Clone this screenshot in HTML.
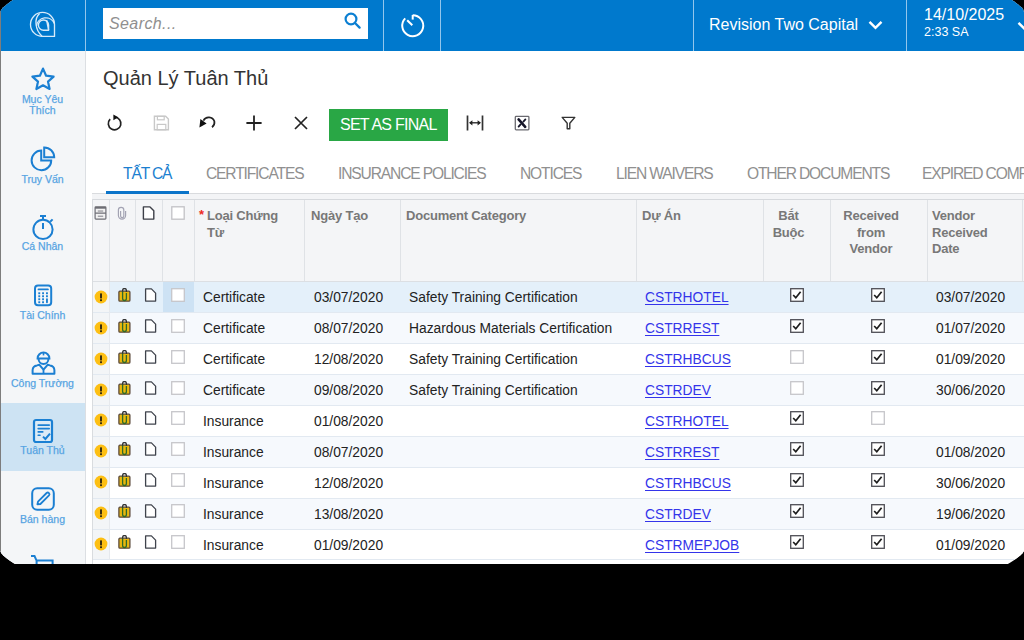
<!DOCTYPE html>
<html><head><meta charset="utf-8">
<style>
*{box-sizing:border-box;margin:0;padding:0}
html,body{width:1024px;height:640px;background:#000;overflow:hidden;font-family:"Liberation Sans",sans-serif}
#frame{position:absolute;left:0;top:0;width:1024px;height:564px;background:#fff;overflow:hidden;clip-path:polygon(0px 12px,1.5px 9.4px,3px 7.6px,5px 5.9px,7px 4.3px,9px 2.8px,11px 1.3px,13px 0px,1011.8px 0px,1013.8px 1.3px,1015.8px 2.8px,1017.8px 4.3px,1019.8px 5.9px,1021.8px 7.6px,1023px 9.3px,1024px 11.9px,1024px 550.9px,1022.5px 553.3px,1020.5px 555.2px,1018.3px 557px,1016px 558.8px,1013.5px 560.5px,1010.8px 562.3px,1007.9px 564px,15px 564px,12.2px 562.3px,9.6px 560.5px,7.2px 558.8px,5px 557px,3px 555.2px,1.4px 553.2px,0px 550.6px)}
.abs{position:absolute}
#hdr{position:absolute;left:0;top:0;width:1024px;height:51px;background:#0079cd}
.vdiv{position:absolute;top:0;width:1px;height:51px;background:#93c6ec}
#search{position:absolute;left:103px;top:8px;width:265px;height:31px;background:#fff}
#search span{position:absolute;left:6px;top:7px;font-size:16px;font-style:italic;color:#8f8f8f;line-height:18px;letter-spacing:0.4px}
.wt{position:absolute;color:#fff;white-space:nowrap}
#side{position:absolute;left:0;top:51px;width:85px;height:513px;background:#f4f6f8}
#sdiv{position:absolute;left:85px;top:51px;width:1px;height:513px;background:#dcdfe3}
.sl{position:absolute;left:0;width:85px;text-align:center;font-size:10.5px;line-height:11.3px;color:#4b9de0;-webkit-text-stroke:0.25px #6aaee6;white-space:nowrap}
#leftedge{position:absolute;left:0;top:0;width:1px;height:564px;background:#7d7d7d}
#title{position:absolute;left:103px;top:67px;font-size:20px;line-height:23px;color:#333;white-space:nowrap}
#btn{position:absolute;left:329px;top:109px;width:119px;height:32px;background:#29a745;color:#fff;font-size:16px;letter-spacing:-0.75px;line-height:32px;padding-left:11px;white-space:nowrap}
.tab{position:absolute;top:165px;font-size:15.6px;line-height:17px;letter-spacing:-1.15px;color:#909090;white-space:nowrap}
#tabline{position:absolute;left:92px;top:193px;width:932px;height:1px;background:#d9dbde}
#tabul{position:absolute;left:106px;top:191px;width:83px;height:3px;background:#0b74c9}
.ht{position:absolute;font-size:13px;font-weight:bold;color:#787878;line-height:16.5px;white-space:nowrap;letter-spacing:-0.2px}
.cell{position:absolute;font-size:13.8px;line-height:16px;color:#222;white-space:nowrap}
a.lnk{color:#3434ea;text-decoration:underline;text-underline-offset:1.5px}

</style></head><body>
<div id="frame">
  <div id="hdr">
    <svg class="abs" style="left:27px;top:9px" width="32" height="32" viewBox="0 0 32 32">
      <g fill="none" stroke="#d8ebfa" stroke-width="1.35" stroke-linejoin="round">
        <path d="M27.5 15.4 L27.5 27.4 L15.5 27.4 A12 12 0 1 1 27.5 15.4 Z"/>
        <path d="M21.6 16 L21.6 21.2 L16.6 21.2 A5.1 5.1 0 1 1 21.6 16 Z"/><path d="M19.6 11 L21.6 21.2"/>
        <path d="M9.4 17.2 A9.4 9.4 0 0 1 27.4 14.6"/>
        <path d="M12.6 4.4 C7.2 9 7.6 20.5 15.2 27.4"/>
      </g>
    </svg>
    <div class="vdiv" style="left:85px"></div>
    <div id="search"><span>Search...</span>
      <svg class="abs" style="left:240px;top:3px" width="20" height="22" viewBox="0 0 20 22"><circle cx="8" cy="8" r="5.4" fill="none" stroke="#0b7fd2" stroke-width="2.2"/><path d="M12 12 L16.6 16.6" stroke="#0b7fd2" stroke-width="2.3" stroke-linecap="round"/></svg>
    </div>
    <div class="vdiv" style="left:383px"></div>
    <svg class="abs" style="left:399px;top:12px" width="28" height="28" viewBox="0 0 28 28">
      <path d="M13.7 3.2 A10.5 10.5 0 1 1 6.2 6.4" fill="none" stroke="#fff" stroke-width="2"/>
      <path d="M13.7 3 L13.7 7.6" stroke="#fff" stroke-width="2"/>
      <path d="M8.2 8.2 L13.3 13.3" stroke="#fff" stroke-width="2"/>
    </svg>
    <div class="vdiv" style="left:440px"></div>
    <div class="vdiv" style="left:693px"></div>
    <div class="wt" style="left:709px;top:16px;font-size:16px;line-height:18px">Revision Two Capital</div>
    <svg class="abs" style="left:868px;top:20px" width="15" height="10" viewBox="0 0 15 10"><path d="M1.5 1.8 L7.5 7.8 L13.5 1.8" fill="none" stroke="#fff" stroke-width="2.4"/></svg>
    <div class="vdiv" style="left:906px"></div>
    <div class="wt" style="left:924px;top:5.5px;font-size:16px;line-height:18px">14/10/2025</div>
    <div class="wt" style="left:924px;top:25px;font-size:12.5px;line-height:14px">2:33 SA</div>
    <svg class="abs" style="left:1017px;top:20.5px" width="15" height="10" viewBox="0 0 15 10"><path d="M1.5 1.8 L7.5 7.8 L13.5 1.8" fill="none" stroke="#fff" stroke-width="2.4"/></svg>
  </div>
  <div id="side"></div>
  <div class="abs" style="left:1px;top:403px;width:84px;height:68px;background:#cde3f3"></div>
  <div id="sdiv"></div>
  <!-- star -->
  <svg class="abs" style="left:30px;top:66px" width="26" height="25" viewBox="0 0 26 25">
    <path d="M13 2.6 L16.1 9.7 L23.6 10.6 L18 15.6 L19.6 23 L13 19.3 L6.4 23 L8 15.6 L2.4 10.6 L9.9 9.7 Z" fill="none" stroke="#1b80d3" stroke-width="2.2" stroke-linejoin="round"/>
  </svg>
  <div class="sl" style="top:94px">Mục Yêu<br>Thích</div>
  <!-- pie -->
  <svg class="abs" style="left:29px;top:146px" width="28" height="28" viewBox="0 0 28 28">
    <path d="M12.2 4.6 A9.8 9.8 0 1 0 22.2 14.4 L12.2 14.4 Z" fill="none" stroke="#1b7fd2" stroke-width="2" stroke-linejoin="miter"/>
    <path d="M15.2 1.4 A9.9 9.9 0 0 1 25.2 11.2 L15.2 11.2 Z" fill="none" stroke="#1b7fd2" stroke-width="2" stroke-linejoin="miter"/>
  </svg>
  <div class="sl" style="top:174px">Truy Vấn</div>
  <!-- stopwatch -->
  <svg class="abs" style="left:30px;top:213px" width="26" height="28" viewBox="0 0 26 28">
    <circle cx="13" cy="16.4" r="9.6" fill="none" stroke="#1b7fd2" stroke-width="2"/>
    <path d="M10 3 L16 3 M13 3 L13 6.6" stroke="#1b7fd2" stroke-width="2"/>
    <path d="M13 10 L13 16" stroke="#1b7fd2" stroke-width="2"/>
    <path d="M20.2 8.8 L22.6 6.4" stroke="#1b7fd2" stroke-width="2"/>
  </svg>
  <div class="sl" style="top:241px">Cá Nhân</div>
  <!-- calculator -->
  <svg class="abs" style="left:33px;top:283px" width="21" height="24" viewBox="0 0 21 24">
    <rect x="2" y="2.5" width="16.2" height="19.8" rx="3" fill="none" stroke="#1b80d3" stroke-width="2"/>
    <rect x="4.6" y="5.4" width="11.2" height="1.9" rx="0.9" fill="#1b80d3"/>
    <g fill="#1b80d3">
      <rect x="5.3" y="9.3" width="1.9" height="1.9"/><rect x="9.1" y="9.3" width="1.9" height="1.9"/><rect x="13" y="9.3" width="1.9" height="1.9"/>
      <rect x="5.3" y="12.3" width="1.9" height="1.9"/><rect x="9.1" y="12.3" width="1.9" height="1.9"/><rect x="13" y="12.3" width="1.9" height="1.9"/>
      <rect x="5.3" y="15.3" width="1.9" height="1.9"/><rect x="9.1" y="15.3" width="1.9" height="1.9"/>
      <rect x="5.3" y="18.3" width="1.9" height="1.9"/><rect x="9.1" y="18.3" width="1.9" height="1.9"/><rect x="13" y="15.3" width="1.9" height="4.9" rx="0.9"/>
    </g>
  </svg>
  <div class="sl" style="top:310px">Tài Chính</div>
  <!-- worker -->
  <svg class="abs" style="left:31px;top:349px" width="25" height="27" viewBox="0 0 25 27">
    <path d="M6.6 9.4 A5.9 5.9 0 0 1 18.4 9.4 Z" fill="none" stroke="#1b7fd2" stroke-width="2"/>
    <path d="M12.5 3.4 L12.5 6.4" stroke="#1b7fd2" stroke-width="1.6"/>
    <path d="M7.6 10 A4.9 5 0 0 0 17.4 10" fill="none" stroke="#1b7fd2" stroke-width="2"/>
    <path d="M1.6 24.8 L1.6 21 A5 5 0 0 1 6 16.4 L8.4 15.8 L12.5 20.6 L16.6 15.8 L19 16.4 A5 5 0 0 1 23.4 21 L23.4 24.8 Z" fill="none" stroke="#1b7fd2" stroke-width="2" stroke-linejoin="round"/>
    <path d="M12.5 20.6 L12.5 24.5" stroke="#1b7fd2" stroke-width="1.8"/>
  </svg>
  <div class="sl" style="top:378px">Công Trường</div>
  <!-- compliance doc -->
  <svg class="abs" style="left:32px;top:418px" width="23" height="26" viewBox="0 0 23 26">
    <rect x="2" y="2" width="18" height="22" rx="2" fill="rgba(255,255,255,0.3)" stroke="#1b80d3" stroke-width="2.2"/>
    <g fill="#1b80d3"><rect x="5.4" y="6.3" width="12.6" height="1.7" rx="0.8"/><rect x="5.4" y="9.8" width="12.6" height="1.7" rx="0.8"/><rect x="5.4" y="13.1" width="6.2" height="1.6" rx="0.8"/><rect x="5.4" y="16.5" width="3.4" height="1.5" rx="0.7"/></g>
    <path d="M11 18.6 L13.4 21 L18 15.6" fill="none" stroke="#1b80d3" stroke-width="2"/>
  </svg>
  <div class="sl" style="top:445px">Tuân Thủ</div>
  <!-- pencil -->
  <svg class="abs" style="left:30px;top:486px" width="26" height="26" viewBox="0 0 26 26">
    <rect x="2.2" y="2.2" width="21.6" height="21.6" rx="5" fill="none" stroke="#1b7fd2" stroke-width="2"/>
    <path d="M7.4 18.4 L8 15.6 L16.6 7 A1.7 1.7 0 0 1 19 9.4 L10.4 18 Z" fill="none" stroke="#1b7fd2" stroke-width="1.8" stroke-linejoin="round"/>
  </svg>
  <div class="sl" style="top:514px">Bán hàng</div>
  <!-- cart -->
  <svg class="abs" style="left:29px;top:553px" width="26" height="16" viewBox="0 0 26 16">
    <path d="M2 3 L5.5 3 L7.6 7.6 L7.6 16 M7.6 7.6 L23.6 7.6 L23.6 16" fill="none" stroke="#1b7fd2" stroke-width="2"/>
  </svg>
  <div id="title">Quản Lý Tuân Thủ</div>
  <!-- toolbar -->
  <svg class="abs" style="left:106px;top:114px" width="18" height="18" viewBox="0 0 18 18">
    <path d="M8.6 3.2 A6.3 6.3 0 1 1 4.15 5.05" fill="none" stroke="#222" stroke-width="1.7"/>
    <path d="M7.4 0.4 L12.2 3.2 L7.4 6.2 Z" fill="#111"/>
  </svg>
  <svg class="abs" style="left:153px;top:115px" width="17" height="16" viewBox="0 0 17 16">
    <path d="M1.4 1.2 L12.6 1.2 L15.4 4 L15.4 14.8 L1.4 14.8 Z" fill="none" stroke="#c8c8c8" stroke-width="1.4"/>
    <rect x="4.4" y="1.4" width="6.8" height="3.4" fill="none" stroke="#c8c8c8" stroke-width="1.2"/>
    <rect x="4.2" y="9.4" width="8.6" height="5.4" fill="none" stroke="#c8c8c8" stroke-width="1.2"/>
  </svg>
  <svg class="abs" style="left:198px;top:115px" width="20" height="14" viewBox="0 0 20 14">
    <path d="M5.4 5.6 A6 6 0 0 1 16.4 6.4 A6 6 0 0 1 14 12.2" fill="none" stroke="#222" stroke-width="1.7"/>
    <path d="M1.4 12.6 L2.4 4 L8.6 8.6 Z" fill="#111"/>
  </svg>
  <svg class="abs" style="left:246px;top:115px" width="16" height="16" viewBox="0 0 16 16">
    <path d="M8 0.4 L8 15.6 M0.4 8 L15.6 8" stroke="#222" stroke-width="1.8"/>
  </svg>
  <svg class="abs" style="left:294px;top:116px" width="14" height="14" viewBox="0 0 14 14">
    <path d="M1 1 L13 13 M13 1 L1 13" stroke="#222" stroke-width="1.7"/>
  </svg>
  <div id="btn">SET AS FINAL</div>
  <svg class="abs" style="left:466px;top:115px" width="18" height="16" viewBox="0 0 18 16">
    <path d="M1.5 0.5 L1.5 15.5 M16.5 0.5 L16.5 15.5" stroke="#333" stroke-width="1.7"/>
    <path d="M4 7.8 L14 7.8" stroke="#222" stroke-width="1.3"/>
    <path d="M3 7.8 L6.4 5.2 L6.4 10.4 Z M15 7.8 L11.6 5.2 L11.6 10.4 Z" fill="#222"/>
  </svg>
  <svg class="abs" style="left:514px;top:115px" width="16" height="16" viewBox="0 0 16 16">
    <rect x="1.3" y="1.4" width="13.6" height="13.4" rx="0.8" fill="#fff" stroke="#6a6a70" stroke-width="1.3"/>
    <path d="M4.6 4.4 L11.2 11.8" stroke="#141428" stroke-width="2.6" stroke-linecap="round"/>
    <path d="M11.4 4.4 L9.4 6.6 M6.6 9.4 L4.6 11.6" stroke="#141428" stroke-width="1.8" stroke-linecap="round"/>
  </svg>
  <svg class="abs" style="left:560px;top:116px" width="17" height="14" viewBox="0 0 17 14">
    <path d="M2.2 1.4 L14.8 1.4 L9.8 7.2 L9.8 12.8 L7.2 12.8 L7.2 7.2 Z" fill="none" stroke="#333" stroke-width="1.4" stroke-linejoin="round"/>
  </svg>

  <div class="tab" style="left:123px;color:#1b7fd0">TẤT CẢ</div>
  <div class="tab" style="left:206px">CERTIFICATES</div>
  <div class="tab" style="left:338px">INSURANCE POLICIES</div>
  <div class="tab" style="left:520px">NOTICES</div>
  <div class="tab" style="left:616px">LIEN WAIVERS</div>
  <div class="tab" style="left:747px">OTHER DOCUMENTS</div>
  <div class="tab" style="left:922px">EXPIRED COMPLIANCE</div>
  <div id="tabline"></div>
  <div id="tabul"></div>
<div class="abs" style="left:92px;top:194px;width:932px;height:5px;background:#f3f4f6"></div>
<div class="abs" style="left:92px;top:199px;width:932px;height:1px;background:#d6d9dd"></div>
<div class="abs" style="left:92px;top:200px;width:932px;height:81px;background:#f4f5f7"></div>
<div class="abs" style="left:92px;top:281px;width:932px;height:1px;background:#dcdfe3"></div>
<div class="abs" style="left:109px;top:200px;width:1px;height:81px;background:#dfe2e6"></div>
<div class="abs" style="left:135px;top:200px;width:1px;height:81px;background:#dfe2e6"></div>
<div class="abs" style="left:162px;top:200px;width:1px;height:81px;background:#dfe2e6"></div>
<div class="abs" style="left:194px;top:200px;width:1px;height:81px;background:#dfe2e6"></div>
<div class="abs" style="left:304px;top:200px;width:1px;height:81px;background:#dfe2e6"></div>
<div class="abs" style="left:400px;top:200px;width:1px;height:81px;background:#dfe2e6"></div>
<div class="abs" style="left:636px;top:200px;width:1px;height:81px;background:#dfe2e6"></div>
<div class="abs" style="left:763px;top:200px;width:1px;height:81px;background:#dfe2e6"></div>
<div class="abs" style="left:830px;top:200px;width:1px;height:81px;background:#dfe2e6"></div>
<div class="abs" style="left:927px;top:200px;width:1px;height:81px;background:#dfe2e6"></div>
<div class="abs" style="left:1022px;top:200px;width:1px;height:81px;background:#dfe2e6"></div>
<div class="abs" style="left:109px;top:282px;width:915px;height:30px;background:#e4f0fa"></div>
<div class="abs" style="left:92px;top:282px;width:17px;height:30px;background:#f3f5f7"></div>
<div class="abs" style="left:163px;top:282px;width:31px;height:30px;background:#cde2f4"></div>
<svg class="abs" style="left:94px;top:290px" width="14" height="14" viewBox="0 0 14 14"><circle cx="7" cy="7" r="6.4" fill="#fdbf13"/><rect x="6" y="3.4" width="2" height="5" fill="#3a2f10"/><rect x="6" y="9.3" width="2" height="1.8" fill="#3a2f10"/></svg>
<svg class="abs" style="left:118px;top:288px" width="13" height="14" viewBox="0 0 13 14"><rect x="0.9" y="3.2" width="11" height="10" rx="1" fill="#e9b80e" stroke="#5b4a3c" stroke-width="1.3"/><path d="M4.6 3 L4.6 10.6 A1.9 1.9 0 0 0 8.4 10.6 L8.4 5" fill="none" stroke="#2e6a2a" stroke-width="1.3"/><path d="M4.6 3.6 L4.6 2.4 A1.9 1.9 0 0 1 8.4 2.4 L8.4 4" fill="none" stroke="#333" stroke-width="1.3"/></svg>
<svg class="abs" style="left:144px;top:288px" width="13" height="14" viewBox="0 0 13 14"><path d="M1.6 0.9 L7.4 0.9 L11.6 5.1 L11.6 13.1 L1.6 13.1 Z" fill="#fff" stroke="#3f434c" stroke-width="1.3" stroke-linejoin="round"/></svg>
<svg class="abs" style="left:171px;top:288px" width="14" height="14" viewBox="0 0 14 14"><rect x="0.7" y="0.7" width="12.6" height="12.6" fill="#fff" stroke="#c6c6ca" stroke-width="1.3"/></svg>
<div class="cell" style="left:203px;top:290px">Certificate</div>
<div class="cell" style="left:314px;top:290px">03/07/2020</div>
<div class="cell" style="left:409px;top:290px">Safety Training Certification</div>
<div class="cell" style="left:645px;top:290px"><a class="lnk">CSTRHOTEL</a></div>
<svg class="abs" style="left:790px;top:288px" width="14" height="14" viewBox="0 0 14 14"><rect x="0.7" y="0.7" width="12.6" height="12.6" fill="#fff" stroke="#4e4e55" stroke-width="1.3"/><path d="M3.2 7 L5.8 9.8 L10.6 3.8" fill="none" stroke="#1e1e1e" stroke-width="1.7"/></svg>
<svg class="abs" style="left:871px;top:288px" width="14" height="14" viewBox="0 0 14 14"><rect x="0.7" y="0.7" width="12.6" height="12.6" fill="#fff" stroke="#4e4e55" stroke-width="1.3"/><path d="M3.2 7 L5.8 9.8 L10.6 3.8" fill="none" stroke="#1e1e1e" stroke-width="1.7"/></svg>
<div class="cell" style="left:936px;top:290px">03/07/2020</div>
<div class="abs" style="left:109px;top:312px;width:915px;height:31px;background:#f6f9fd"></div>
<div class="abs" style="left:92px;top:312px;width:17px;height:31px;background:#f3f5f7"></div>
<svg class="abs" style="left:94px;top:321px" width="14" height="14" viewBox="0 0 14 14"><circle cx="7" cy="7" r="6.4" fill="#fdbf13"/><rect x="6" y="3.4" width="2" height="5" fill="#3a2f10"/><rect x="6" y="9.3" width="2" height="1.8" fill="#3a2f10"/></svg>
<svg class="abs" style="left:118px;top:319px" width="13" height="14" viewBox="0 0 13 14"><rect x="0.9" y="3.2" width="11" height="10" rx="1" fill="#e9b80e" stroke="#5b4a3c" stroke-width="1.3"/><path d="M4.6 3 L4.6 10.6 A1.9 1.9 0 0 0 8.4 10.6 L8.4 5" fill="none" stroke="#2e6a2a" stroke-width="1.3"/><path d="M4.6 3.6 L4.6 2.4 A1.9 1.9 0 0 1 8.4 2.4 L8.4 4" fill="none" stroke="#333" stroke-width="1.3"/></svg>
<svg class="abs" style="left:144px;top:319px" width="13" height="14" viewBox="0 0 13 14"><path d="M1.6 0.9 L7.4 0.9 L11.6 5.1 L11.6 13.1 L1.6 13.1 Z" fill="#fff" stroke="#3f434c" stroke-width="1.3" stroke-linejoin="round"/></svg>
<svg class="abs" style="left:171px;top:319px" width="14" height="14" viewBox="0 0 14 14"><rect x="0.7" y="0.7" width="12.6" height="12.6" fill="#fff" stroke="#c6c6ca" stroke-width="1.3"/></svg>
<div class="cell" style="left:203px;top:321px">Certificate</div>
<div class="cell" style="left:314px;top:321px">08/07/2020</div>
<div class="cell" style="left:409px;top:321px">Hazardous Materials Certification</div>
<div class="cell" style="left:645px;top:321px"><a class="lnk">CSTRREST</a></div>
<svg class="abs" style="left:790px;top:319px" width="14" height="14" viewBox="0 0 14 14"><rect x="0.7" y="0.7" width="12.6" height="12.6" fill="#fff" stroke="#4e4e55" stroke-width="1.3"/><path d="M3.2 7 L5.8 9.8 L10.6 3.8" fill="none" stroke="#1e1e1e" stroke-width="1.7"/></svg>
<svg class="abs" style="left:871px;top:319px" width="14" height="14" viewBox="0 0 14 14"><rect x="0.7" y="0.7" width="12.6" height="12.6" fill="#fff" stroke="#4e4e55" stroke-width="1.3"/><path d="M3.2 7 L5.8 9.8 L10.6 3.8" fill="none" stroke="#1e1e1e" stroke-width="1.7"/></svg>
<div class="cell" style="left:936px;top:321px">01/07/2020</div>
<div class="abs" style="left:109px;top:343px;width:915px;height:31px;background:#ffffff"></div>
<div class="abs" style="left:92px;top:343px;width:17px;height:31px;background:#f3f5f7"></div>
<svg class="abs" style="left:94px;top:352px" width="14" height="14" viewBox="0 0 14 14"><circle cx="7" cy="7" r="6.4" fill="#fdbf13"/><rect x="6" y="3.4" width="2" height="5" fill="#3a2f10"/><rect x="6" y="9.3" width="2" height="1.8" fill="#3a2f10"/></svg>
<svg class="abs" style="left:118px;top:350px" width="13" height="14" viewBox="0 0 13 14"><rect x="0.9" y="3.2" width="11" height="10" rx="1" fill="#e9b80e" stroke="#5b4a3c" stroke-width="1.3"/><path d="M4.6 3 L4.6 10.6 A1.9 1.9 0 0 0 8.4 10.6 L8.4 5" fill="none" stroke="#2e6a2a" stroke-width="1.3"/><path d="M4.6 3.6 L4.6 2.4 A1.9 1.9 0 0 1 8.4 2.4 L8.4 4" fill="none" stroke="#333" stroke-width="1.3"/></svg>
<svg class="abs" style="left:144px;top:350px" width="13" height="14" viewBox="0 0 13 14"><path d="M1.6 0.9 L7.4 0.9 L11.6 5.1 L11.6 13.1 L1.6 13.1 Z" fill="#fff" stroke="#3f434c" stroke-width="1.3" stroke-linejoin="round"/></svg>
<svg class="abs" style="left:171px;top:350px" width="14" height="14" viewBox="0 0 14 14"><rect x="0.7" y="0.7" width="12.6" height="12.6" fill="#fff" stroke="#c6c6ca" stroke-width="1.3"/></svg>
<div class="cell" style="left:203px;top:352px">Certificate</div>
<div class="cell" style="left:314px;top:352px">12/08/2020</div>
<div class="cell" style="left:409px;top:352px">Safety Training Certification</div>
<div class="cell" style="left:645px;top:352px"><a class="lnk">CSTRHBCUS</a></div>
<svg class="abs" style="left:790px;top:350px" width="14" height="14" viewBox="0 0 14 14"><rect x="0.7" y="0.7" width="12.6" height="12.6" fill="#fff" stroke="#c6c6ca" stroke-width="1.3"/></svg>
<svg class="abs" style="left:871px;top:350px" width="14" height="14" viewBox="0 0 14 14"><rect x="0.7" y="0.7" width="12.6" height="12.6" fill="#fff" stroke="#4e4e55" stroke-width="1.3"/><path d="M3.2 7 L5.8 9.8 L10.6 3.8" fill="none" stroke="#1e1e1e" stroke-width="1.7"/></svg>
<div class="cell" style="left:936px;top:352px">01/09/2020</div>
<div class="abs" style="left:109px;top:374px;width:915px;height:31px;background:#f6f9fd"></div>
<div class="abs" style="left:92px;top:374px;width:17px;height:31px;background:#f3f5f7"></div>
<svg class="abs" style="left:94px;top:383px" width="14" height="14" viewBox="0 0 14 14"><circle cx="7" cy="7" r="6.4" fill="#fdbf13"/><rect x="6" y="3.4" width="2" height="5" fill="#3a2f10"/><rect x="6" y="9.3" width="2" height="1.8" fill="#3a2f10"/></svg>
<svg class="abs" style="left:118px;top:381px" width="13" height="14" viewBox="0 0 13 14"><rect x="0.9" y="3.2" width="11" height="10" rx="1" fill="#e9b80e" stroke="#5b4a3c" stroke-width="1.3"/><path d="M4.6 3 L4.6 10.6 A1.9 1.9 0 0 0 8.4 10.6 L8.4 5" fill="none" stroke="#2e6a2a" stroke-width="1.3"/><path d="M4.6 3.6 L4.6 2.4 A1.9 1.9 0 0 1 8.4 2.4 L8.4 4" fill="none" stroke="#333" stroke-width="1.3"/></svg>
<svg class="abs" style="left:144px;top:381px" width="13" height="14" viewBox="0 0 13 14"><path d="M1.6 0.9 L7.4 0.9 L11.6 5.1 L11.6 13.1 L1.6 13.1 Z" fill="#fff" stroke="#3f434c" stroke-width="1.3" stroke-linejoin="round"/></svg>
<svg class="abs" style="left:171px;top:381px" width="14" height="14" viewBox="0 0 14 14"><rect x="0.7" y="0.7" width="12.6" height="12.6" fill="#fff" stroke="#c6c6ca" stroke-width="1.3"/></svg>
<div class="cell" style="left:203px;top:383px">Certificate</div>
<div class="cell" style="left:314px;top:383px">09/08/2020</div>
<div class="cell" style="left:409px;top:383px">Safety Training Certification</div>
<div class="cell" style="left:645px;top:383px"><a class="lnk">CSTRDEV</a></div>
<svg class="abs" style="left:790px;top:381px" width="14" height="14" viewBox="0 0 14 14"><rect x="0.7" y="0.7" width="12.6" height="12.6" fill="#fff" stroke="#c6c6ca" stroke-width="1.3"/></svg>
<svg class="abs" style="left:871px;top:381px" width="14" height="14" viewBox="0 0 14 14"><rect x="0.7" y="0.7" width="12.6" height="12.6" fill="#fff" stroke="#4e4e55" stroke-width="1.3"/><path d="M3.2 7 L5.8 9.8 L10.6 3.8" fill="none" stroke="#1e1e1e" stroke-width="1.7"/></svg>
<div class="cell" style="left:936px;top:383px">30/06/2020</div>
<div class="abs" style="left:109px;top:405px;width:915px;height:31px;background:#ffffff"></div>
<div class="abs" style="left:92px;top:405px;width:17px;height:31px;background:#f3f5f7"></div>
<svg class="abs" style="left:94px;top:413px" width="14" height="14" viewBox="0 0 14 14"><circle cx="7" cy="7" r="6.4" fill="#fdbf13"/><rect x="6" y="3.4" width="2" height="5" fill="#3a2f10"/><rect x="6" y="9.3" width="2" height="1.8" fill="#3a2f10"/></svg>
<svg class="abs" style="left:118px;top:411px" width="13" height="14" viewBox="0 0 13 14"><rect x="0.9" y="3.2" width="11" height="10" rx="1" fill="#e9b80e" stroke="#5b4a3c" stroke-width="1.3"/><path d="M4.6 3 L4.6 10.6 A1.9 1.9 0 0 0 8.4 10.6 L8.4 5" fill="none" stroke="#2e6a2a" stroke-width="1.3"/><path d="M4.6 3.6 L4.6 2.4 A1.9 1.9 0 0 1 8.4 2.4 L8.4 4" fill="none" stroke="#333" stroke-width="1.3"/></svg>
<svg class="abs" style="left:144px;top:411px" width="13" height="14" viewBox="0 0 13 14"><path d="M1.6 0.9 L7.4 0.9 L11.6 5.1 L11.6 13.1 L1.6 13.1 Z" fill="#fff" stroke="#3f434c" stroke-width="1.3" stroke-linejoin="round"/></svg>
<svg class="abs" style="left:171px;top:411px" width="14" height="14" viewBox="0 0 14 14"><rect x="0.7" y="0.7" width="12.6" height="12.6" fill="#fff" stroke="#c6c6ca" stroke-width="1.3"/></svg>
<div class="cell" style="left:203px;top:414px">Insurance</div>
<div class="cell" style="left:314px;top:414px">01/08/2020</div>
<div class="cell" style="left:645px;top:414px"><a class="lnk">CSTRHOTEL</a></div>
<svg class="abs" style="left:790px;top:411px" width="14" height="14" viewBox="0 0 14 14"><rect x="0.7" y="0.7" width="12.6" height="12.6" fill="#fff" stroke="#4e4e55" stroke-width="1.3"/><path d="M3.2 7 L5.8 9.8 L10.6 3.8" fill="none" stroke="#1e1e1e" stroke-width="1.7"/></svg>
<svg class="abs" style="left:871px;top:411px" width="14" height="14" viewBox="0 0 14 14"><rect x="0.7" y="0.7" width="12.6" height="12.6" fill="#fff" stroke="#c6c6ca" stroke-width="1.3"/></svg>
<div class="abs" style="left:109px;top:436px;width:915px;height:31px;background:#f6f9fd"></div>
<div class="abs" style="left:92px;top:436px;width:17px;height:31px;background:#f3f5f7"></div>
<svg class="abs" style="left:94px;top:444px" width="14" height="14" viewBox="0 0 14 14"><circle cx="7" cy="7" r="6.4" fill="#fdbf13"/><rect x="6" y="3.4" width="2" height="5" fill="#3a2f10"/><rect x="6" y="9.3" width="2" height="1.8" fill="#3a2f10"/></svg>
<svg class="abs" style="left:118px;top:442px" width="13" height="14" viewBox="0 0 13 14"><rect x="0.9" y="3.2" width="11" height="10" rx="1" fill="#e9b80e" stroke="#5b4a3c" stroke-width="1.3"/><path d="M4.6 3 L4.6 10.6 A1.9 1.9 0 0 0 8.4 10.6 L8.4 5" fill="none" stroke="#2e6a2a" stroke-width="1.3"/><path d="M4.6 3.6 L4.6 2.4 A1.9 1.9 0 0 1 8.4 2.4 L8.4 4" fill="none" stroke="#333" stroke-width="1.3"/></svg>
<svg class="abs" style="left:144px;top:442px" width="13" height="14" viewBox="0 0 13 14"><path d="M1.6 0.9 L7.4 0.9 L11.6 5.1 L11.6 13.1 L1.6 13.1 Z" fill="#fff" stroke="#3f434c" stroke-width="1.3" stroke-linejoin="round"/></svg>
<svg class="abs" style="left:171px;top:442px" width="14" height="14" viewBox="0 0 14 14"><rect x="0.7" y="0.7" width="12.6" height="12.6" fill="#fff" stroke="#c6c6ca" stroke-width="1.3"/></svg>
<div class="cell" style="left:203px;top:445px">Insurance</div>
<div class="cell" style="left:314px;top:445px">08/07/2020</div>
<div class="cell" style="left:645px;top:445px"><a class="lnk">CSTRREST</a></div>
<svg class="abs" style="left:790px;top:442px" width="14" height="14" viewBox="0 0 14 14"><rect x="0.7" y="0.7" width="12.6" height="12.6" fill="#fff" stroke="#4e4e55" stroke-width="1.3"/><path d="M3.2 7 L5.8 9.8 L10.6 3.8" fill="none" stroke="#1e1e1e" stroke-width="1.7"/></svg>
<svg class="abs" style="left:871px;top:442px" width="14" height="14" viewBox="0 0 14 14"><rect x="0.7" y="0.7" width="12.6" height="12.6" fill="#fff" stroke="#4e4e55" stroke-width="1.3"/><path d="M3.2 7 L5.8 9.8 L10.6 3.8" fill="none" stroke="#1e1e1e" stroke-width="1.7"/></svg>
<div class="cell" style="left:936px;top:445px">01/08/2020</div>
<div class="abs" style="left:109px;top:467px;width:915px;height:31px;background:#ffffff"></div>
<div class="abs" style="left:92px;top:467px;width:17px;height:31px;background:#f3f5f7"></div>
<svg class="abs" style="left:94px;top:475px" width="14" height="14" viewBox="0 0 14 14"><circle cx="7" cy="7" r="6.4" fill="#fdbf13"/><rect x="6" y="3.4" width="2" height="5" fill="#3a2f10"/><rect x="6" y="9.3" width="2" height="1.8" fill="#3a2f10"/></svg>
<svg class="abs" style="left:118px;top:473px" width="13" height="14" viewBox="0 0 13 14"><rect x="0.9" y="3.2" width="11" height="10" rx="1" fill="#e9b80e" stroke="#5b4a3c" stroke-width="1.3"/><path d="M4.6 3 L4.6 10.6 A1.9 1.9 0 0 0 8.4 10.6 L8.4 5" fill="none" stroke="#2e6a2a" stroke-width="1.3"/><path d="M4.6 3.6 L4.6 2.4 A1.9 1.9 0 0 1 8.4 2.4 L8.4 4" fill="none" stroke="#333" stroke-width="1.3"/></svg>
<svg class="abs" style="left:144px;top:473px" width="13" height="14" viewBox="0 0 13 14"><path d="M1.6 0.9 L7.4 0.9 L11.6 5.1 L11.6 13.1 L1.6 13.1 Z" fill="#fff" stroke="#3f434c" stroke-width="1.3" stroke-linejoin="round"/></svg>
<svg class="abs" style="left:171px;top:473px" width="14" height="14" viewBox="0 0 14 14"><rect x="0.7" y="0.7" width="12.6" height="12.6" fill="#fff" stroke="#c6c6ca" stroke-width="1.3"/></svg>
<div class="cell" style="left:203px;top:476px">Insurance</div>
<div class="cell" style="left:314px;top:476px">12/08/2020</div>
<div class="cell" style="left:645px;top:476px"><a class="lnk">CSTRHBCUS</a></div>
<svg class="abs" style="left:790px;top:473px" width="14" height="14" viewBox="0 0 14 14"><rect x="0.7" y="0.7" width="12.6" height="12.6" fill="#fff" stroke="#4e4e55" stroke-width="1.3"/><path d="M3.2 7 L5.8 9.8 L10.6 3.8" fill="none" stroke="#1e1e1e" stroke-width="1.7"/></svg>
<svg class="abs" style="left:871px;top:473px" width="14" height="14" viewBox="0 0 14 14"><rect x="0.7" y="0.7" width="12.6" height="12.6" fill="#fff" stroke="#4e4e55" stroke-width="1.3"/><path d="M3.2 7 L5.8 9.8 L10.6 3.8" fill="none" stroke="#1e1e1e" stroke-width="1.7"/></svg>
<div class="cell" style="left:936px;top:476px">30/06/2020</div>
<div class="abs" style="left:109px;top:498px;width:915px;height:31px;background:#f6f9fd"></div>
<div class="abs" style="left:92px;top:498px;width:17px;height:31px;background:#f3f5f7"></div>
<svg class="abs" style="left:94px;top:506px" width="14" height="14" viewBox="0 0 14 14"><circle cx="7" cy="7" r="6.4" fill="#fdbf13"/><rect x="6" y="3.4" width="2" height="5" fill="#3a2f10"/><rect x="6" y="9.3" width="2" height="1.8" fill="#3a2f10"/></svg>
<svg class="abs" style="left:118px;top:504px" width="13" height="14" viewBox="0 0 13 14"><rect x="0.9" y="3.2" width="11" height="10" rx="1" fill="#e9b80e" stroke="#5b4a3c" stroke-width="1.3"/><path d="M4.6 3 L4.6 10.6 A1.9 1.9 0 0 0 8.4 10.6 L8.4 5" fill="none" stroke="#2e6a2a" stroke-width="1.3"/><path d="M4.6 3.6 L4.6 2.4 A1.9 1.9 0 0 1 8.4 2.4 L8.4 4" fill="none" stroke="#333" stroke-width="1.3"/></svg>
<svg class="abs" style="left:144px;top:504px" width="13" height="14" viewBox="0 0 13 14"><path d="M1.6 0.9 L7.4 0.9 L11.6 5.1 L11.6 13.1 L1.6 13.1 Z" fill="#fff" stroke="#3f434c" stroke-width="1.3" stroke-linejoin="round"/></svg>
<svg class="abs" style="left:171px;top:504px" width="14" height="14" viewBox="0 0 14 14"><rect x="0.7" y="0.7" width="12.6" height="12.6" fill="#fff" stroke="#c6c6ca" stroke-width="1.3"/></svg>
<div class="cell" style="left:203px;top:507px">Insurance</div>
<div class="cell" style="left:314px;top:507px">13/08/2020</div>
<div class="cell" style="left:645px;top:507px"><a class="lnk">CSTRDEV</a></div>
<svg class="abs" style="left:790px;top:504px" width="14" height="14" viewBox="0 0 14 14"><rect x="0.7" y="0.7" width="12.6" height="12.6" fill="#fff" stroke="#4e4e55" stroke-width="1.3"/><path d="M3.2 7 L5.8 9.8 L10.6 3.8" fill="none" stroke="#1e1e1e" stroke-width="1.7"/></svg>
<svg class="abs" style="left:871px;top:504px" width="14" height="14" viewBox="0 0 14 14"><rect x="0.7" y="0.7" width="12.6" height="12.6" fill="#fff" stroke="#4e4e55" stroke-width="1.3"/><path d="M3.2 7 L5.8 9.8 L10.6 3.8" fill="none" stroke="#1e1e1e" stroke-width="1.7"/></svg>
<div class="cell" style="left:936px;top:507px">19/06/2020</div>
<div class="abs" style="left:109px;top:529px;width:915px;height:30px;background:#ffffff"></div>
<div class="abs" style="left:92px;top:529px;width:17px;height:30px;background:#f3f5f7"></div>
<svg class="abs" style="left:94px;top:537px" width="14" height="14" viewBox="0 0 14 14"><circle cx="7" cy="7" r="6.4" fill="#fdbf13"/><rect x="6" y="3.4" width="2" height="5" fill="#3a2f10"/><rect x="6" y="9.3" width="2" height="1.8" fill="#3a2f10"/></svg>
<svg class="abs" style="left:118px;top:535px" width="13" height="14" viewBox="0 0 13 14"><rect x="0.9" y="3.2" width="11" height="10" rx="1" fill="#e9b80e" stroke="#5b4a3c" stroke-width="1.3"/><path d="M4.6 3 L4.6 10.6 A1.9 1.9 0 0 0 8.4 10.6 L8.4 5" fill="none" stroke="#2e6a2a" stroke-width="1.3"/><path d="M4.6 3.6 L4.6 2.4 A1.9 1.9 0 0 1 8.4 2.4 L8.4 4" fill="none" stroke="#333" stroke-width="1.3"/></svg>
<svg class="abs" style="left:144px;top:535px" width="13" height="14" viewBox="0 0 13 14"><path d="M1.6 0.9 L7.4 0.9 L11.6 5.1 L11.6 13.1 L1.6 13.1 Z" fill="#fff" stroke="#3f434c" stroke-width="1.3" stroke-linejoin="round"/></svg>
<svg class="abs" style="left:171px;top:535px" width="14" height="14" viewBox="0 0 14 14"><rect x="0.7" y="0.7" width="12.6" height="12.6" fill="#fff" stroke="#c6c6ca" stroke-width="1.3"/></svg>
<div class="cell" style="left:203px;top:538px">Insurance</div>
<div class="cell" style="left:314px;top:538px">01/09/2020</div>
<div class="cell" style="left:645px;top:538px"><a class="lnk">CSTRMEPJOB</a></div>
<svg class="abs" style="left:790px;top:535px" width="14" height="14" viewBox="0 0 14 14"><rect x="0.7" y="0.7" width="12.6" height="12.6" fill="#fff" stroke="#4e4e55" stroke-width="1.3"/><path d="M3.2 7 L5.8 9.8 L10.6 3.8" fill="none" stroke="#1e1e1e" stroke-width="1.7"/></svg>
<svg class="abs" style="left:871px;top:535px" width="14" height="14" viewBox="0 0 14 14"><rect x="0.7" y="0.7" width="12.6" height="12.6" fill="#fff" stroke="#4e4e55" stroke-width="1.3"/><path d="M3.2 7 L5.8 9.8 L10.6 3.8" fill="none" stroke="#1e1e1e" stroke-width="1.7"/></svg>
<div class="cell" style="left:936px;top:538px">01/09/2020</div>
<div class="abs" style="left:92px;top:312px;width:932px;height:1px;background:#e2e9f1"></div>
<div class="abs" style="left:92px;top:343px;width:932px;height:1px;background:#e2e9f1"></div>
<div class="abs" style="left:92px;top:374px;width:932px;height:1px;background:#e2e9f1"></div>
<div class="abs" style="left:92px;top:405px;width:932px;height:1px;background:#e2e9f1"></div>
<div class="abs" style="left:92px;top:436px;width:932px;height:1px;background:#e2e9f1"></div>
<div class="abs" style="left:92px;top:467px;width:932px;height:1px;background:#e2e9f1"></div>
<div class="abs" style="left:92px;top:498px;width:932px;height:1px;background:#e2e9f1"></div>
<div class="abs" style="left:92px;top:529px;width:932px;height:1px;background:#e2e9f1"></div>
<div class="abs" style="left:92px;top:559px;width:932px;height:1px;background:#e2e9f1"></div>
<div class="abs" style="left:109px;top:282px;width:1px;height:278px;background:#e6e9ed"></div>
<div class="abs" style="left:92px;top:199px;width:1px;height:365px;background:#d9dcdf"></div>  <!-- header icons -->
  <svg class="abs" style="left:94px;top:206px" width="13" height="14" viewBox="0 0 13 14">
    <rect x="1.1" y="0.9" width="10.8" height="12.2" rx="0.8" fill="#f2f2f2" stroke="#6d6d74" stroke-width="1.2"/>
    <rect x="1.1" y="0.9" width="10.8" height="1.8" fill="#6d6d74"/>
    <path d="M1.1 7.2 L11.9 7.2" stroke="#6d6d74" stroke-width="1.3"/>
    <rect x="3.8" y="4.4" width="5.4" height="1.3" fill="#9a9aa0"/><rect x="3.8" y="9.6" width="5.4" height="1.3" fill="#9a9aa0"/>
  </svg>
  <svg class="abs" style="left:117px;top:206px" width="11" height="14" viewBox="0 0 11 14">
    <path d="M8.6 5 L8.6 9.6 A3.6 3.6 0 0 1 1.4 9.6 L1.4 4 A2.7 2.7 0 0 1 6.8 4 L6.8 10 A1.6 1.6 0 0 1 3.6 10 L3.6 5" fill="none" stroke="#a3a3b3" stroke-width="1.2"/>
  </svg>
  <svg class="abs" style="left:142px;top:206px" width="13" height="14" viewBox="0 0 13 14">
    <path d="M1.4 0.9 L8 0.9 L11.8 4.7 L11.8 13.1 L1.4 13.1 Z" fill="#fff" stroke="#3c3f48" stroke-width="1.4" stroke-linejoin="round"/>
  </svg>
  <svg class="abs" style="left:171px;top:206px" width="14" height="14" viewBox="0 0 14 14">
    <rect x="0.8" y="0.8" width="12.4" height="12.4" fill="#fff" stroke="#c2c2c6" stroke-width="1.3"/>
  </svg>
  <div class="abs" style="left:199px;top:208px;color:#ee2a22;font-size:13px;font-weight:bold;line-height:14px">*</div>
  <div class="ht" style="left:207px;top:208px">Loại Chứng<br>Từ</div>
  <div class="ht" style="left:311px;top:208px">Ngày Tạo</div>
  <div class="ht" style="left:406px;top:208px">Document Category</div>
  <div class="ht" style="left:642px;top:208px">Dự Án</div>
  <div class="ht" style="left:763px;top:208px;width:51px;text-align:center">Bắt<br>Buộc</div>
  <div class="ht" style="left:830px;top:208px;width:82px;text-align:center">Received<br>from<br>Vendor</div>
  <div class="ht" style="left:932px;top:208px">Vendor<br>Received<br>Date</div>

<div id="leftedge"></div>
</div>
</body></html>
